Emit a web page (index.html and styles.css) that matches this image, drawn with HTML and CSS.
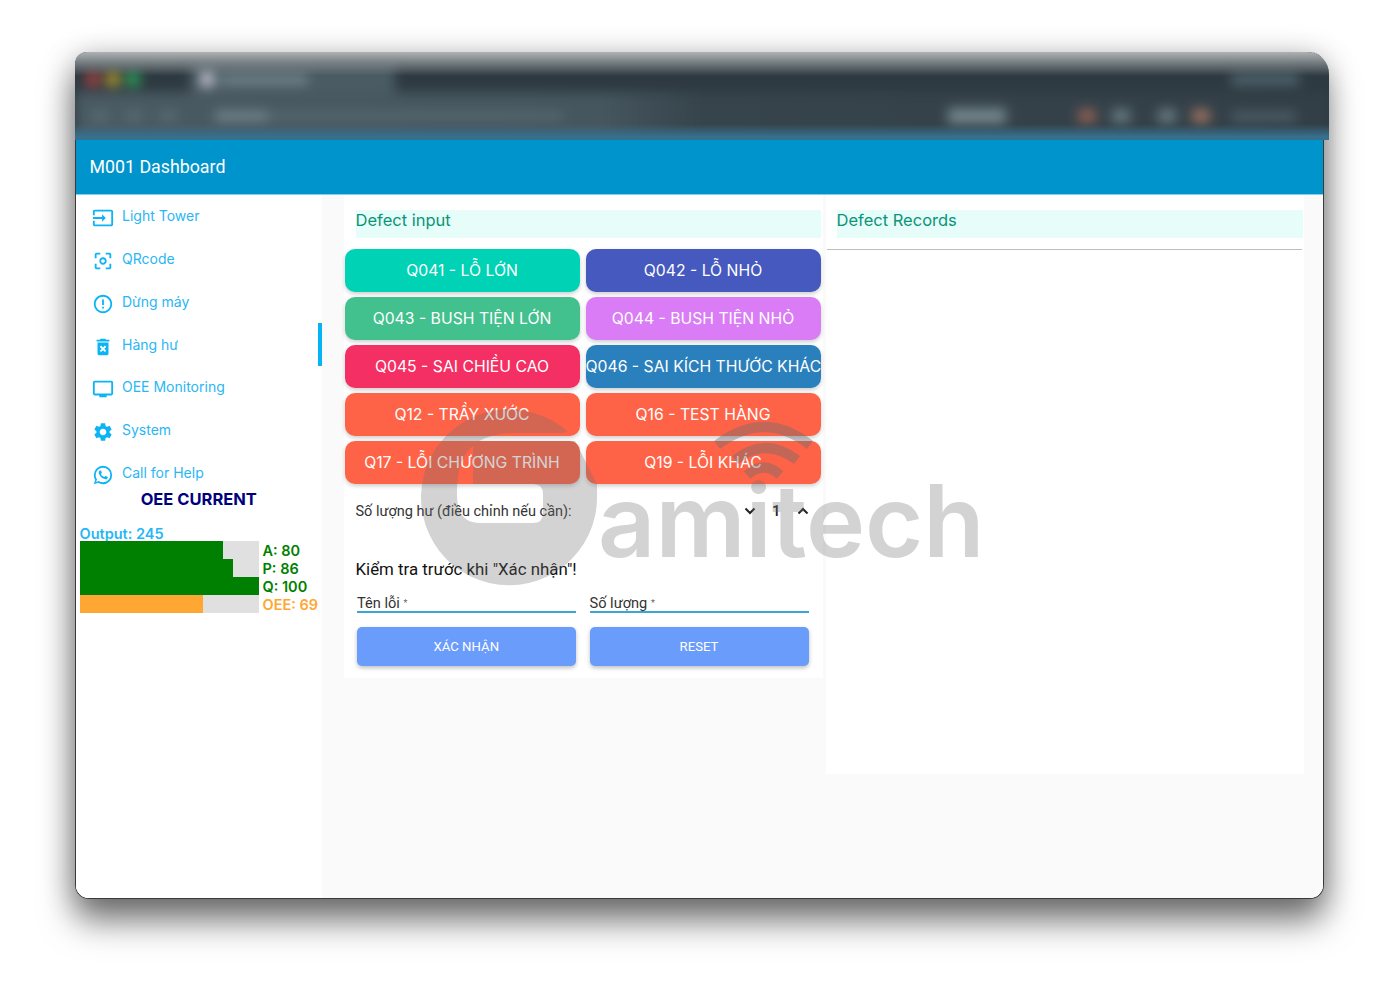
FILE: index.html
```html
<!DOCTYPE html>
<html lang="vi">
<head>
<meta charset="utf-8">
<title>M001 Dashboard</title>
<link rel="stylesheet" href="styles.css">
</head>
<body>
<div class="window">
  <div class="chrome">
    <div class="chrome-blur">
      <div class="chrome-row chrome-tabs">
        <span class="light red"></span><span class="light yellow"></span><span class="light green"></span>
        <span class="tab"><span class="favicon"></span><span class="tab-title"></span></span>
        <span class="spacer"></span>
        <span class="profile"></span>
      </div>
      <div class="chrome-row chrome-tools">
        <span class="nav-dot"></span><span class="nav-dot"></span><span class="nav-dot"></span>
        <span class="url-host"></span>
        <span class="urlbar"></span>
        <span class="spacer"></span>
        <span class="ext ext-a"></span><span class="ext ext-b"></span><span class="ext ext-c"></span>
        <span class="ext ext-d"></span><span class="ext ext-e"></span><span class="ext ext-f"></span>
      </div>
    </div>
  </div>
  <header class="appbar">M001 Dashboard</header>
  <div class="body">
    <nav class="sidebar">
      <a class="nav-item">
        <svg class="nav-icon" viewBox="0 0 24 24"><path d="M21 3.01H3c-1.1 0-2 .9-2 2V9h2V4.99h18v14.03H3V15H1v4.01c0 1.1.9 1.98 2 1.98h18c1.1 0 2-.88 2-1.98v-14c0-1.11-.9-2-2-2zM11 16l4-4-4-4v3H1v2h10v3z"/></svg>
        <span>Light Tower</span>
      </a>
      <a class="nav-item">
        <svg class="nav-icon" viewBox="0 0 24 24"><path d="M5 15H3v4c0 1.1.9 2 2 2h4v-2H5v-4zM5 5h4V3H5c-1.1 0-2 .9-2 2v4h2V5zm14-2h-4v2h4v4h2V5c0-1.1-.9-2-2-2zm0 16h-4v2h4c1.1 0 2-.9 2-2v-4h-2v4zM12 8c-2.21 0-4 1.79-4 4s1.79 4 4 4 4-1.79 4-4-1.79-4-4-4zm0 6c-1.1 0-2-.9-2-2s.9-2 2-2 2 .9 2 2-.9 2-2 2z"/></svg>
        <span>QRcode</span>
      </a>
      <a class="nav-item">
        <svg class="nav-icon" viewBox="0 0 24 24"><path d="M11 15h2v2h-2zm0-8h2v6h-2zm.99-5C6.47 2 2 6.48 2 12s4.47 10 9.99 10C17.52 22 22 17.52 22 12S17.52 2 11.99 2zM12 20c-4.42 0-8-3.58-8-8s3.58-8 8-8 8 3.58 8 8-3.58 8-8 8z"/></svg>
        <span>Dừng máy</span>
      </a>
      <a class="nav-item active">
        <svg class="nav-icon" viewBox="0 0 24 24"><path d="M6 19c0 1.1.9 2 2 2h8c1.1 0 2-.9 2-2V7H6v12zm2.46-7.12l1.41-1.41L12 12.59l2.12-2.12 1.41 1.41L13.41 14l2.12 2.12-1.41 1.41L12 15.41l-2.12 2.12-1.41-1.41L10.59 14l-2.13-2.12zM15.5 4l-1-1h-5l-1 1H5v2h14V4z"/></svg>
        <span>Hàng hư</span>
      </a>
      <a class="nav-item">
        <svg class="nav-icon" viewBox="0 0 24 24"><path d="M21 3H3c-1.1 0-2 .9-2 2v12c0 1.1.9 2 2 2h5v2h8v-2h5c1.1 0 2-.9 2-2V5c0-1.1-.9-2-2-2zm0 14H3V5h18v12z"/></svg>
        <span>OEE Monitoring</span>
      </a>
      <a class="nav-item">
        <svg class="nav-icon" viewBox="0 0 24 24"><path d="M19.14 12.94c.04-.3.06-.61.06-.94 0-.32-.02-.64-.07-.94l2.03-1.58c.18-.14.23-.41.12-.61l-1.92-3.32c-.12-.22-.37-.29-.59-.22l-2.39.96c-.5-.38-1.03-.7-1.62-.94l-.36-2.54c-.04-.24-.24-.41-.48-.41h-3.84c-.24 0-.43.17-.47.41l-.36 2.54c-.59.24-1.13.57-1.62.94l-2.39-.96c-.22-.08-.47 0-.59.22L2.74 8.87c-.12.21-.08.47.12.61l2.03 1.58c-.05.3-.09.63-.09.94s.02.64.07.94l-2.03 1.58c-.18.14-.23.41-.12.61l1.92 3.32c.12.22.37.29.59.22l2.39-.96c.5.38 1.03.7 1.62.94l.36 2.54c.05.24.24.41.48.41h3.84c.24 0 .44-.17.47-.41l.36-2.54c.59-.24 1.13-.56 1.62-.94l2.39.96c.22.08.47 0 .59-.22l1.92-3.32c.12-.22.07-.47-.12-.61l-2.01-1.58zM12 15.6c-1.98 0-3.6-1.62-3.6-3.6s1.62-3.6 3.6-3.6 3.6 1.62 3.6 3.6-1.62 3.6-3.6 3.6z"/></svg>
        <span>System</span>
      </a>
      <a class="nav-item">
        <svg class="nav-icon" viewBox="0 0 24 24"><path d="M16.75 13.96c.25.13.41.2.46.3.06.11.04.61-.21 1.18-.2.56-1.24 1.1-1.7 1.12-.46.02-.47.36-2.96-.73-2.49-1.09-3.99-3.75-4.11-3.92-.12-.17-.96-1.38-.92-2.61.05-1.22.69-1.8.95-2.04.24-.26.51-.29.68-.26h.47c.15 0 .36-.06.55.45l.69 1.87c.06.13.1.28.01.44l-.27.41-.39.42c-.12.12-.26.25-.12.5.12.26.62 1.09 1.32 1.78.91.88 1.71 1.17 1.95 1.3.24.14.39.12.54-.04l.81-.94c.19-.25.35-.19.58-.11l1.67.88M12 2a10 10 0 0 1 10 10 10 10 0 0 1-10 10c-1.97 0-3.8-.57-5.35-1.55L2 22l1.55-4.65A9.969 9.969 0 0 1 2 12 10 10 0 0 1 12 2m0 2a8 8 0 0 0-8 8c0 1.72.54 3.31 1.46 4.61L4.5 19.5l2.89-.96A7.95 7.95 0 0 0 12 20a8 8 0 0 0 8-8 8 8 0 0 0-8-8z"/></svg>
        <span>Call for Help</span>
      </a>
      <h2 class="oee-title">OEE CURRENT</h2>
      <div class="output">Output: 245</div>
      <div class="oee-chart">
        <div class="bars">
          <div class="track"><div class="fill good" style="width:80%"></div></div>
          <div class="track"><div class="fill good" style="width:86%"></div></div>
          <div class="track"><div class="fill good" style="width:100%"></div></div>
          <div class="track"><div class="fill warn" style="width:69%"></div></div>
        </div>
        <div class="bar-labels">
          <div class="bar-label good-text">A: 80</div>
          <div class="bar-label good-text">P: 86</div>
          <div class="bar-label good-text">Q: 100</div>
          <div class="bar-label warn-text">OEE: 69</div>
        </div>
      </div>
    </nav>
    <main class="main">
      <section class="panel panel-input">
        <h3 class="band">Defect input</h3>
        <div class="defect-grid">
          <button class="defect c-teal">Q041 - LỖ LỚN</button>
          <button class="defect c-indigo">Q042 - LỖ NHỎ</button>
          <button class="defect c-green">Q043 - BUSH TIỆN LỚN</button>
          <button class="defect c-violet">Q044 - BUSH TIỆN NHỎ</button>
          <button class="defect c-pink">Q045 - SAI CHIỀU CAO</button>
          <button class="defect c-blue">Q046 - SAI KÍCH THƯỚC KHÁC</button>
          <button class="defect c-coral">Q12 - TRẦY XƯỚC</button>
          <button class="defect c-coral">Q16 - TEST HÀNG</button>
          <button class="defect c-coral">Q17 - LỖI CHƯƠNG TRÌNH</button>
          <button class="defect c-coral">Q19 - LỖI KHÁC</button>
        </div>
        <div class="qty-row">
          <span class="qty-label">Số lượng hư (điều chỉnh nếu cần):</span>
          <span class="stepper">
            <svg class="chev" viewBox="0 0 12 8"><path d="M1.5 1.5 6 6l4.5-4.5"/></svg>
            <span class="qty-value">1</span>
            <svg class="chev" viewBox="0 0 12 8"><path d="M1.5 6.5 6 2l4.5 4.5"/></svg>
          </span>
        </div>
        <p class="check">Kiểm tra trước khi "Xác nhận"!</p>
        <div class="form-row">
          <div class="field">Tên lỗi <small>*</small></div>
          <div class="field">Số lượng <small>*</small></div>
        </div>
        <div class="form-row actions">
          <button class="action">XÁC NHẬN</button>
          <button class="action">RESET</button>
        </div>
      </section>
      <section class="panel panel-records">
        <h3 class="band band-records">Defect Records</h3>
        <div class="rule"></div>
      </section>
    </main>
  </div>
</div>
<div class="watermark">
  <svg class="wm-art" viewBox="0 0 600 210">
    <path class="wm-s" d="M148 32A88 88 0 1 0 177 95V84L155 41H53V84H113Q123 84 123 94V113Q123 123 113 123H60Q37 123 37 95V90Q37 33 95 33H140Z"/>
    <path class="wm-wave" d="M297 45Q345 9 390 45M315 60Q345 36 377 60M327 75Q344 60 360 75"/>
  </svg>
  <span class="wm-text">amitech</span>
</div>
</body>
</html>
```
FILE: styles.css
```css
* { box-sizing: border-box; }
html, body { margin: 0; padding: 0; height: 100%; background: #fff; overflow: hidden; }
body { position: relative; font-family: "Inter", "Noto Sans", sans-serif; }

.window {
  margin: 52px 0 0 75px;
  width: 1249px;
  height: 847px;
  display: flex;
  flex-direction: column;
  background: #fff;
  border-radius: 14px;
  border: solid #3a3a3a;
  border-width: 0 1.5px 1.5px 1.5px;
  box-shadow: 0 22px 34px rgba(0,0,0,.5), 0 4px 30px rgba(0,0,0,.25);
}

.chrome {
  position: relative;
  margin: 0 -6px 0 -1.5px;
  height: 88px;
  flex: none;
  overflow: hidden;
  border-radius: 12px 22px 0 0;
  background: #2e3a41;
}
.chrome::before, .chrome::after {
  content: "";
  position: absolute;
  left: 0; right: 0;
  z-index: 1;
}
.chrome::before { top: 0; height: 24px; background: linear-gradient(#aeb2b4, rgba(46,58,65,0)); }
.chrome::after { bottom: 0; height: 16px; background: linear-gradient(rgba(54,104,130,0), #37708d 80%); }
.chrome-blur { filter: blur(6px); display: flex; flex-direction: column; height: 100%; padding-top: 14px; }
.chrome-row { display: flex; align-items: center; }
.spacer { flex: 1; }
.chrome-tabs { height: 26px; padding-left: 10px; gap: 4px; }
.light { width: 16px; height: 16px; border-radius: 50%; }
.red { background: #a04040; }
.yellow { background: #a8932c; }
.green { background: #2b9a58; }
.tab { margin-left: 45px; width: 205px; height: 26px; background: #4a5b63; display: flex; align-items: center; gap: 6px; padding-left: 10px; }
.favicon { width: 14px; height: 16px; background: #b9b9c6; }
.tab-title { width: 88px; height: 11px; background: #6e8088; }
.profile { width: 68px; height: 11px; margin-right: 30px; background: #50656f; }
.chrome-tools { height: 48px; background: linear-gradient(90deg, #4a5a62, #46565e 42%, #36444c 50%, #333f47); }
.nav-dot { width: 18px; height: 12px; margin-left: 16px; background: #56686f; }
.url-host { width: 52px; height: 10px; margin-left: 38px; background: #72838a; }
.urlbar { width: 296px; height: 8px; background: #57686f; }
.ext { height: 14px; width: 18px; margin-left: 16px; background: #5b6a70; }
.ext-a { width: 58px; height: 16px; background: #72838a; }
.ext-b { margin-left: 72px; background: #8a5f54; }
.ext-c { background: #66787e; }
.ext-d { margin-left: 28px; background: #66787e; }
.ext-e { background: #96705f; }
.ext-f { width: 64px; height: 9px; margin: 0 33px 0 22px; background: #4e5f68; }

.appbar {
  flex: none;
  height: 55px;
  display: flex;
  align-items: center;
  padding: 0 0 1px 13.5px;
  background: #0094cc;
  border-bottom: 1px solid #7fd0ee;
  color: #fff;
  font-size: 17.8px;
  font-family: "Roboto", sans-serif;
}

.body { flex: 1; display: flex; min-height: 0; border-radius: 0 0 13px 13px; overflow: hidden; background: #fafafa; }

.sidebar { flex: none; width: 245.5px; padding-top: 0.6px; background: #fff; }
.nav-item {
  position: relative;
  display: flex;
  align-items: center;
  height: 42.85px;
  padding-left: 16px;
  color: #29b6f6;
  font-size: 14px;
  line-height: 1;
}
.nav-item span { margin-left: 8px; position: relative; top: -1px; }
.nav-item.active::after {
  content: "";
  position: absolute;
  right: 0; top: -1px;
  width: 4px;
  height: 43px;
  background: #03b5f5;
}
.nav-icon { width: 22px; height: 22px; fill: #0db4f5; position: relative; top: 1px; }

.oee-title {
  margin: -8.6px 0 0;
  text-align: center;
  height: 24px;
  color: #00007f;
  font-size: 16.5px;
  font-weight: 700;
  line-height: 24px;
}
.output { margin: 15px 0 0 3.5px; height: 15px; color: #29b6f6; font-size: 14.5px; font-weight: 600; line-height: 16px; }
.oee-chart { display: flex; margin-left: 3.5px; }
.bars { width: 179px; }
.track { height: 18px; background: #e0e0e0; }
.fill { height: 100%; }
.good { background: #008000; }
.warn { background: #ffa733; }
.bar-labels { margin-left: 4px; padding-top: 1px; }
.bar-label { height: 18px; font-size: 14.5px; font-weight: 600; line-height: 18px; white-space: nowrap; }
.good-text { color: #008000; }
.warn-text { color: #ffa733; }

.main { flex: 1; display: flex; align-items: flex-start; padding-left: 22px; gap: 3px; }
.panel { background: #fff; }
.panel-input { width: 479px; height: 483px; padding: 15px 2px 0 1px; }
.panel-records { width: 478px; height: 579px; padding: 15px 0 0 1px; }
.band {
  margin: 0 0 0 11px;
  height: 28px;
  background: #e6fdfa;
  color: #0a9478;
  font-size: 16.5px;
  font-weight: 400;
  line-height: 21px;
}
.band-records { margin-left: 10px; margin-right: 1px; }
.rule { margin-top: 11px; margin-right: 2px; height: 1px; background: #bdbdbd; }

.defect-grid { display: grid; grid-template-columns: 235px 235px; grid-auto-rows: 43px; column-gap: 6px; row-gap: 5px; margin-top: 11px; }
.defect {
  border: 0;
  padding: 0 0 1px;
  border-radius: 10px;
  color: #fff;
  font-family: "Inter", sans-serif;
  font-size: 15.75px;
  white-space: nowrap;
  box-shadow: 0 2px 4px rgba(0,0,0,.2);
}
.c-teal { background: #00d3b5; }
.c-indigo { background: #4659bf; }
.c-green { background: #42c08d; }
.c-violet { background: #da7cf5; }
.c-pink { background: #f42f63; }
.c-blue { background: #2a80bd; }
.c-coral { background: #ff6347; }

.qty-row { height: 54px; margin-right: 12px; padding-left: 11px; display: flex; align-items: center; justify-content: space-between; font-family: "Roboto", sans-serif; }
.qty-label { font-size: 14.5px; color: #333; }
.stepper { display: flex; align-items: center; gap: 16px; color: #222; font-size: 15px; font-weight: 500; }
.chev { width: 12px; height: 8px; fill: none; stroke: #222; stroke-width: 2; }
.check { margin: 19px 0 0 11px; height: 24px; color: #111; font-family: "Roboto", sans-serif; font-size: 16.85px; line-height: 24px; }
.form-row { display: grid; grid-template-columns: 218.5px 219px; column-gap: 14px; margin-left: 12.5px; }
.field { margin-top: 12px; height: 20px; border-bottom: 2px solid #3aa6d4; font-family: "Roboto", sans-serif; font-size: 14.6px; color: #333; line-height: 20px; }
.field small { font-size: 9px; color: #666; vertical-align: 2px; }
.actions { margin-top: 14px; }
.action {
  height: 39px;
  border: 0;
  border-radius: 5px;
  background: #6a9cfb;
  color: #fff;
  font-family: "Roboto", sans-serif;
  font-size: 13.2px;
  box-shadow: 0 2px 4px rgba(0,0,0,.25);
}

.watermark { position: absolute; left: 420px; top: 400px; width: 600px; height: 210px; pointer-events: none; }
.wm-art { position: absolute; left: 0; top: 0; width: 600px; height: 210px; }
.wm-s { fill: rgba(110,110,110,.3); }
.wm-wave { fill: none; stroke: rgba(110,110,110,.42); stroke-width: 10; }
.wm-text {
  position: absolute;
  left: 178px;
  top: 61px;
  color: rgba(110,110,110,.3);
  font-family: "Inter", sans-serif;
  font-size: 100px;
  font-weight: 600;
  line-height: 120px;
}
```
